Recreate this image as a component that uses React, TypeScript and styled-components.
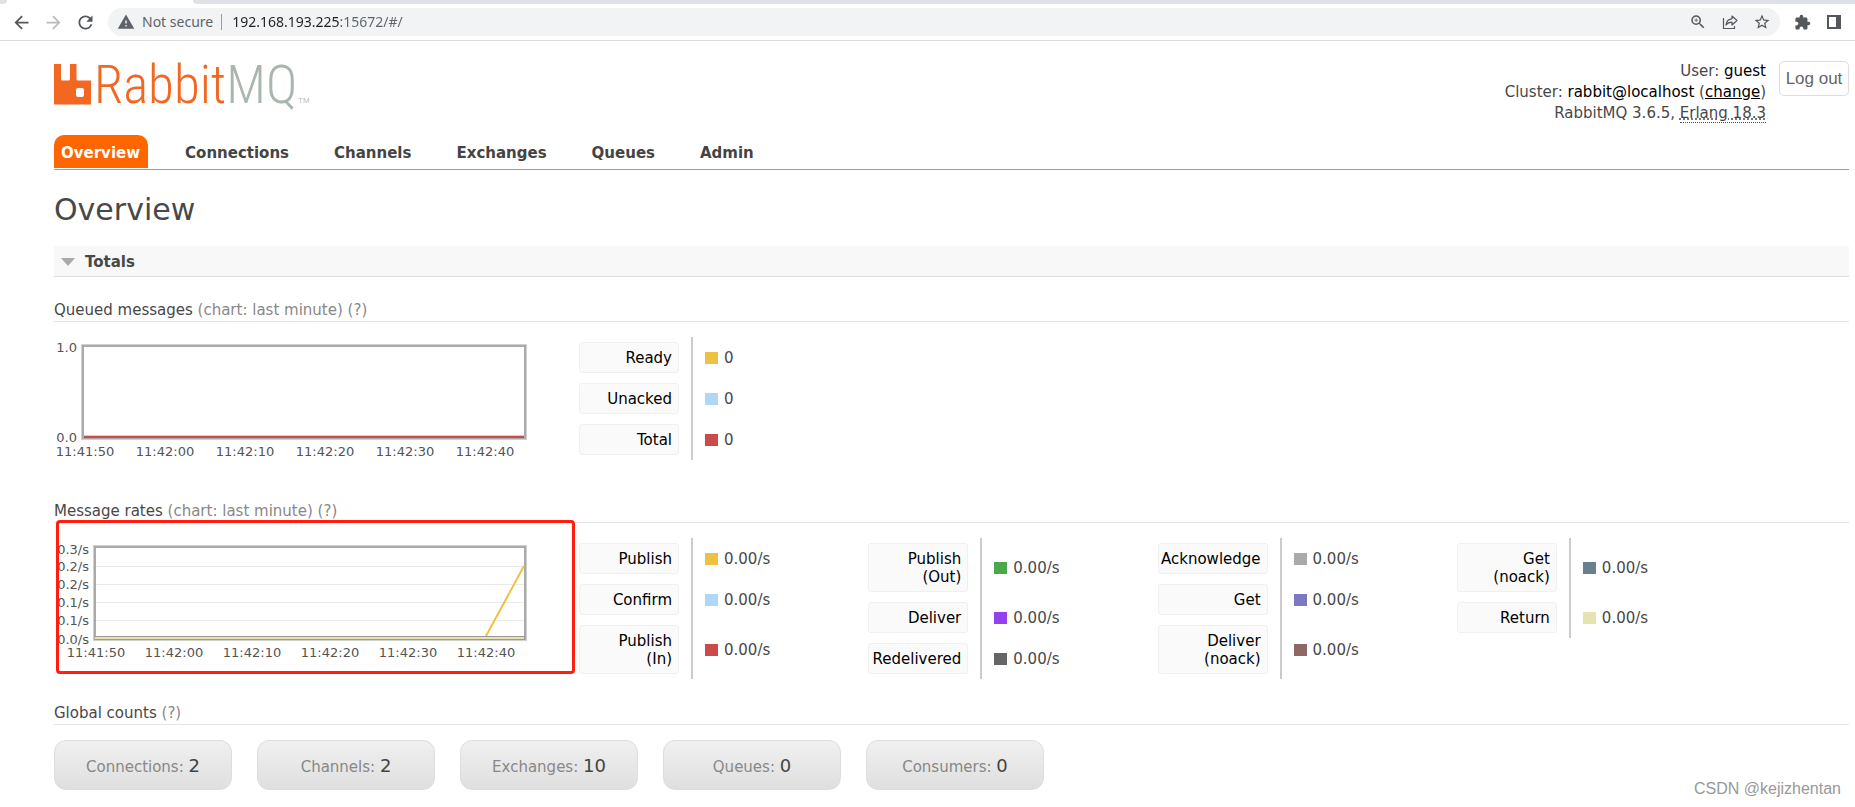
import React from "react";
import styled, { createGlobalStyle } from "styled-components";
import {
  MdArrowBack,
  MdArrowForward,
  MdExtension,
  MdRefresh,
  MdStarBorder,
  MdWarning,
  MdZoomIn,
} from "react-icons/md";

const sans = `"DejaVu Sans", Verdana, sans-serif`;

const GlobalStyle = createGlobalStyle`
  * { box-sizing: border-box; }
  body {
    margin: 0;
    background: #fff;
    color: #484848;
    font: 15px/20px ${sans};
  }
  h1, h2, h3 { margin: 0; font-weight: normal; }
`;

/* ---------- browser chrome ---------- */

const TabStrip = styled.div`
  display: flex;
  height: 4px;
`;
const StripEdge = styled.div`
  width: 7px;
  background: #dee1e6;
  border-bottom-right-radius: 4px;
`;
const ActiveTab = styled.div`
  width: 186px;
`;
const StripRest = styled.div`
  flex: 1;
  background: #dee1e6;
  border-bottom-left-radius: 4px;
`;
const Toolbar = styled.div`
  display: flex;
  align-items: center;
  height: 37px;
  padding: 0 14px 0 11px;
  border-bottom: 1px solid #dadce0;
`;
const IconButton = styled.button<{ $faded?: boolean; $gap?: number }>`
  display: flex;
  padding: 0;
  margin: 0 0 0 ${(p) => p.$gap ?? 0}px;
  border: 0;
  background: none;
  color: ${(p) => (p.$faded ? "#babcbe" : "#54575b")};
`;
const AddressBar = styled.div`
  display: flex;
  align-items: center;
  flex: 1;
  height: 28px;
  margin-left: 12px;
  padding: 0 9px;
  border-radius: 14px;
  background: #f1f3f4;
  color: #5f6368;
  font: 14px/20px "Noto Sans", sans-serif;
`;
const Security = styled.span`
  margin-left: 7px;
  padding-right: 8px;
  line-height: 16px;
  border-right: 1px solid #9a9da1;
`;
/* The host part is dark, the port and path are grey. */
const Address = styled.input`
  flex: 1;
  min-width: 0;
  margin-left: 10px;
  padding: 0;
  border: 0;
  outline: 0;
  font: inherit;
  color: transparent;
  background: linear-gradient(90deg, #202124 108px, #5f6368 108px);
  -webkit-background-clip: text;
  background-clip: text;
`;

/* ---------- page ---------- */

const Page = styled.div`
  position: relative;
  padding: 20px 6px 17px 54px;
`;
const Header = styled.header`
  display: flex;
  align-items: flex-start;
  height: 74px;
`;
const LogoLink = styled.a`
  display: flex;
  margin-right: auto;
`;
const Account = styled.div`
  text-align: right;
  line-height: 21px;
  b {
    color: #000;
    font-weight: normal;
  }
  a {
    color: #000;
  }
`;
const Version = styled.abbr`
  text-decoration: underline dotted;
  border-bottom: 1px dotted #555;
`;
const LogOut = styled.button`
  height: 35px;
  width: 70px;
  margin-left: 13px;
  padding: 0;
  border: 1px solid #ddd;
  border-radius: 5px;
  background: #fff;
  color: #666;
  font: 17px/20px "Liberation Sans", Arial, sans-serif;
`;
const Tabs = styled.nav`
  display: flex;
  gap: 30px;
  padding-bottom: 1px;
  border-bottom: 1px solid #f80;
`;
const Tab = styled.a<{ $active?: boolean }>`
  height: 33px;
  padding: 0 8px 0 7px;
  border-radius: 10px 10px 0 0;
  background: ${(p) => (p.$active ? "#f60" : "transparent")};
  color: ${(p) => (p.$active ? "#fff" : "#444")};
  font-weight: bold;
  line-height: 36px;
  text-decoration: none;
`;
const Title = styled.h1`
  margin: 20px 0 16px;
  font-size: 30px;
  line-height: 40px;
`;
const SectionBar = styled.h2`
  display: flex;
  align-items: center;
  gap: 10px;
  height: 31px;
  padding: 2px 0 0 7px;
  border-bottom: 1px solid #ddd;
  background: #f8f8f8;
  font-size: 15px;
  font-weight: bold;
  line-height: 20px;
`;
const Totals = styled.section`
  padding-top: 23px;
`;
const Heading = styled.h3`
  height: 22px;
  margin-bottom: 15px;
  border-bottom: 1px solid #e4e4e4;
  font-size: 15px;
  line-height: 21px;
`;
const Muted = styled.span`
  color: #888;
`;
const Body = styled.div`
  position: relative;
  display: flex;
  align-items: flex-start;
  min-height: 140px;
  margin-bottom: 24px;
`;
const ChartBox = styled.div`
  flex: none;
  width: 525px;
`;
const ChartText = styled.text`
  font: 13px ${sans};
  fill: #545454;
`;
const Groups = styled.div`
  display: flex;
  align-items: flex-start;
  gap: 98px;
`;
const Legend = styled.table<{ $label: number }>`
  border-collapse: separate;
  border-spacing: 0;
  th {
    padding: 5px 12px 5px 0;
    font-weight: normal;
  }
  th button {
    display: block;
    width: ${(p) => p.$label}px;
    padding: 6px 6px 5px 2px;
    border: 1px solid #f0f0f0;
    border-radius: 3px;
    background: #fafafa;
    color: #000;
    font: 15px/18px ${sans};
    text-align: right;
  }
  td {
    padding: 0 0 0 12px;
    border-left: 2px solid #ccc;
    white-space: nowrap;
  }
`;
const Value = styled.span`
  display: flex;
  align-items: center;
  gap: 6px;
`;
const Swatch = styled.span<{ $color: string }>`
  width: 13px;
  height: 12px;
  background: ${(p) => p.$color};
`;
const Highlight = styled.div`
  position: absolute;
  left: 2px;
  top: -18px;
  width: 519px;
  height: 154px;
  border: 3px solid #ff1e10;
  border-radius: 4px;
  pointer-events: none;
`;
const Counts = styled.div`
  display: flex;
  gap: 25px;
`;
const Count = styled.a`
  width: 178px;
  height: 50px;
  border: 1px solid #ddd;
  border-radius: 12px;
  background: linear-gradient(#f0f0f0, #dfdfdf);
  color: #888;
  line-height: 50px;
  text-align: center;
  text-decoration: none;
  strong {
    color: #444;
    font-size: 18px;
    font-weight: normal;
  }
`;
const Watermark = styled.div`
  position: absolute;
  right: 14px;
  bottom: 8px;
  color: #999;
  font: 16px/20px "Liberation Sans", Arial, sans-serif;
`;
const LogoText = styled.text`
  font: 300 53px "Roboto Condensed", Roboto, sans-serif;
`;

const Logo = () => (
  <svg width="270" height="62" viewBox="0 0 270 62" role="img" aria-label="RabbitMQ">
    <path
      fill="#f26722"
      fillRule="evenodd"
      d="M0 3h7V18q0 1.500 1.500 1.500h6Q16 19.500 16 18V3h6.500V18q0 1.500 1.500 1.500h13V43.500H0zM24 27q-2 0-2 2v5q0 2 2 2h4q2 0 2-2v-5q0-2-2-2z"
    />
    <LogoText x="40" y="42" fill="#f26722">
      Rabbit<tspan fill="#a9b6ae">MQ</tspan>
    </LogoText>
    <text x="244" y="42" fontSize="8" fontFamily="Liberation Sans" fill="#bbb">
      TM
    </text>
  </svg>
);

const ShareIcon = () => (
  <svg width="16" height="16" viewBox="0 0 16 16" fill="none" stroke="currentColor" strokeWidth="1.200">
    <path d="M1.500 4v10.500h11V12" />
    <path d="M4 11C4.500 7 6.500 5 10 4.800V2l5 4.500-5 4.500V8.200C7.500 8.200 5.500 9 4 11z" strokeLinejoin="round" />
  </svg>
);
const PanelIcon = () => (
  <svg width="14" height="14" viewBox="0 0 14 14" fill="currentColor">
    <path fillRule="evenodd" d="M0 0h14v14H0zM2 2v10h7V2z" />
  </svg>
);

type ChartProps = {
  label: string;
  left: number;
  yTicks: [string, number][];
  grid?: number[];
  first: number;
  step: number;
  children: React.ReactNode;
};
const times = ["11:41:50", "11:42:00", "11:42:10", "11:42:20", "11:42:30", "11:42:40"];

const Chart = ({ label, left, yTicks, grid = [], first, step, children }: ChartProps) => (
  <ChartBox>
    <svg width="480" height="125" role="img" aria-label={label}>
      <rect x={left} y="7" width={473 - left} height="96" fill="#d0d0d0" />
      <rect x={left + 1} y="8" width={471 - left} height="94" fill="#aaa" />
      <rect x={left + 3} y="10" width={467 - left} height="91" fill="#fff" />
      {grid.map((y) => (
        <rect key={y} x={left + 3} y={y} width={467 - left} height="1" fill="#eaeaea" />
      ))}
      {children}
      {yTicks.map(([t, y]) => (
        <ChartText key={y} x={left - 4} y={y} textAnchor="end">
          {t}
        </ChartText>
      ))}
      {times.map((t, i) => (
        <ChartText key={t} x={first + i * step} y="119" textAnchor="middle">
          {t}
        </ChartText>
      ))}
    </svg>
  </ChartBox>
);

type Row = { name: string; note?: string; color: string; value: string };

const LegendTable = ({ rows, label = 100 }: { rows: Row[]; label?: number }) => (
  <Legend $label={label}>
    <tbody>
      {rows.map((r) => (
        <tr key={r.name + (r.note ?? "")}>
          <th scope="row">
            <button type="button">
              {r.name}
              {r.note && (
                <>
                  <br />
                  {r.note}
                </>
              )}
            </button>
          </th>
          <td>
            <Value>
              <Swatch $color={r.color} />
              {r.value}
            </Value>
          </td>
        </tr>
      ))}
    </tbody>
  </Legend>
);

const queued: Row[] = [
  { name: "Ready", color: "#edc240", value: "0" },
  { name: "Unacked", color: "#afd8f8", value: "0" },
  { name: "Total", color: "#cb4b4b", value: "0" },
];
const zero = "0.00/s";
const rates: { label?: number; rows: Row[] }[] = [
  {
    rows: [
      { name: "Publish", color: "#edc240", value: zero },
      { name: "Confirm", color: "#afd8f8", value: zero },
      { name: "Publish", note: "(In)", color: "#cb4b4b", value: zero },
    ],
  },
  {
    rows: [
      { name: "Publish", note: "(Out)", color: "#4da74d", value: zero },
      { name: "Deliver", color: "#9440ed", value: zero },
      { name: "Redelivered", color: "#666666", value: zero },
    ],
  },
  {
    label: 110,
    rows: [
      { name: "Acknowledge", color: "#aaaaaa", value: zero },
      { name: "Get", color: "#7c79c3", value: zero },
      { name: "Deliver", note: "(noack)", color: "#8e6767", value: zero },
    ],
  },
  {
    rows: [
      { name: "Get", note: "(noack)", color: "#67808d", value: zero },
      { name: "Return", color: "#e5e4ae", value: zero },
    ],
  },
];
const tabs = ["Overview", "Connections", "Channels", "Exchanges", "Queues", "Admin"];
const counts: [string, number][] = [
  ["Connections", 2],
  ["Channels", 2],
  ["Exchanges", 10],
  ["Queues", 0],
  ["Consumers", 0],
];

export default function App() {
  return (
    <>
      <GlobalStyle />
      <TabStrip>
        <StripEdge />
        <ActiveTab />
        <StripRest />
      </TabStrip>
      <Toolbar>
        <IconButton aria-label="Back"><MdArrowBack size={21} /></IconButton>
        <IconButton aria-label="Forward" $faded $gap={11}><MdArrowForward size={21} /></IconButton>
        <IconButton aria-label="Reload" $gap={11}><MdRefresh size={21} /></IconButton>
        <AddressBar>
          <MdWarning size={18} />
          <Security>Not secure</Security>
          <Address aria-label="Address" defaultValue="192.168.193.225:15672/#/" />
          <IconButton aria-label="Zoom"><MdZoomIn size={18} /></IconButton>
          <IconButton aria-label="Share" $gap={15}><ShareIcon /></IconButton>
          <IconButton aria-label="Bookmark" $gap={15}><MdStarBorder size={18} /></IconButton>
        </AddressBar>
        <IconButton aria-label="Extensions" $gap={14}><MdExtension size={17} /></IconButton>
        <IconButton aria-label="Side panel" $gap={16}><PanelIcon /></IconButton>
      </Toolbar>

      <Page>
        <Header>
          <LogoLink href="#/"><Logo /></LogoLink>
          <Account>
            <div>User: <b>guest</b></div>
            <div>Cluster: <b>rabbit@localhost</b> (<a href="#/cluster-name">change</a>)</div>
            <div>RabbitMQ 3.6.5, <Version>Erlang 18.3</Version></div>
          </Account>
          <LogOut type="button">Log out</LogOut>
        </Header>
        <Tabs>
          {tabs.map((t, i) => (
            <Tab key={t} href="#/" $active={i === 0}>{t}</Tab>
          ))}
        </Tabs>

        <main>
          <Title>Overview</Title>
          <SectionBar>
            <svg width="14" height="8" viewBox="0 0 14 8" aria-hidden="true">
              <path d="M0 0h14L7 8z" fill="#aaa" />
            </svg>
            Totals
          </SectionBar>
          <Totals>
            <Heading>Queued messages <Muted>(chart: last minute) (?)</Muted></Heading>
            <Body>
              <Chart label="Queued messages, last minute" left={27} yTicks={[["1.0", 15], ["0.0", 105]]} first={31} step={80}>
                <rect x="30" y="98" width="440" height="1" fill="#d5cccc" />
                <rect x="30" y="99" width="440" height="2" fill="#cb4b4b" />
              </Chart>
              <LegendTable rows={queued} />
            </Body>

            <Heading>Message rates <Muted>(chart: last minute) (?)</Muted></Heading>
            <Body>
              <Chart
                label="Message rates, last minute"
                left={39}
                yTicks={[["0.3/s", 16], ["0.2/s", 33], ["0.2/s", 51], ["0.1/s", 69], ["0.1/s", 87], ["0.0/s", 106]]}
                grid={[28, 46, 64, 82]}
                first={42}
                step={78}
              >
                <path d="M431.500 99L470 28" stroke="#edc240" strokeWidth="2" />
                <rect x="41" y="98" width="430" height="4" fill="#999" />
                <rect x="41" y="99" width="429" height="2" fill="#e5e4ae" />
              </Chart>
              <Groups>
                {rates.map((g, i) => (
                  <LegendTable key={i} rows={g.rows} label={g.label} />
                ))}
              </Groups>
              <Highlight />
            </Body>

            <Heading>Global counts <Muted>(?)</Muted></Heading>
            <Counts>
              {counts.map(([name, n]) => (
                <Count key={name} href="#/">{name}: <strong>{n}</strong></Count>
              ))}
            </Counts>
          </Totals>
        </main>
        <Watermark>CSDN @kejizhentan</Watermark>
      </Page>
    </>
  );
}
